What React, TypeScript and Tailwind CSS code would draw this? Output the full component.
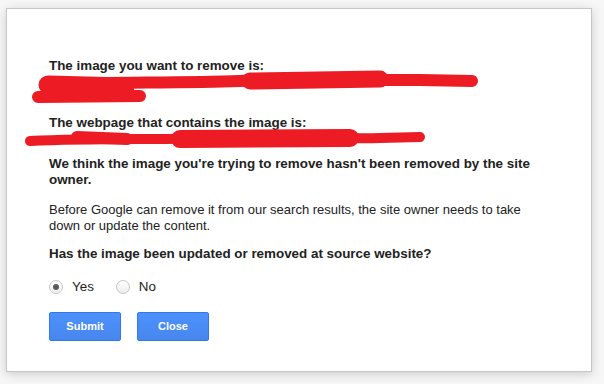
import React from 'react';

const font = { fontFamily: '"Liberation Sans", Arial, sans-serif' };

const Radio: React.FC<{ checked?: boolean; label: string }> = ({ checked, label }) => (
  <label className="flex items-center">
    <span className="w-[14px] h-[14px] rounded-full border border-[#c6c6c6] bg-gradient-to-b from-white to-[#eeeeee] flex items-center justify-center">
      {checked && <span className="w-[6px] h-[6px] rounded-full bg-[#5a5a5a]" />}
    </span>
    <span className="ml-[9px] text-[13.4px] text-[#222]">{label}</span>
  </label>
);

const Scribbles: React.FC = () => (
  <svg className="absolute inset-0 pointer-events-none" width="584" height="362" viewBox="0 0 584 362" fill="none">
    <g stroke="#ed1c24" strokeLinecap="round" strokeLinejoin="round">
      {/* first url */}
      <path d="M43 75 C113 73 173 74 233 72 C293 69 353 71 413 71 L465 72" strokeWidth="12" />
      <path d="M243 72 L373 70" strokeWidth="17" />
      <path d="M41 76 L118 78" strokeWidth="19" />
      <path d="M31 88 L133 87" strokeWidth="12" />
      {/* second url */}
      <path d="M23 132 C93 129 153 131 213 129 C283 127 333 130 373 129 L413 128" strokeWidth="10" />
      <path d="M173 130 L343 129" strokeWidth="18" />
      <path d="M70 128 L120 130" strokeWidth="12" />
    </g>
  </svg>
);

export default function App() {
  return (
    <div className="w-[604px] h-[384px] bg-[#f7f7f7] pt-[8px] pl-[6px]" style={font}>
      <div className="relative w-[586px] h-[364px] bg-white border border-[#c6c6c6] shadow-[0_2px_10px_rgba(0,0,0,0.18)] pl-[42px] pt-[49px] pr-[40px] text-[#222]">
        <p className="text-[13.4px] leading-[16px] font-bold">The image you want to remove is:</p>
        <div className="h-[41px]" />
        <p className="text-[13.4px] leading-[16px] font-bold">The webpage that contains the image is:</p>
        <p className="mt-[25px] text-[13.4px] leading-[16px] font-bold">
          We think the image you're trying to remove hasn't been removed by the site owner.
        </p>
        <p className="mt-[14px] text-[13px] leading-[16px]">
          Before Google can remove it from our search results, the site owner needs to take down or update the content.
        </p>
        <p className="mt-[12px] text-[13.4px] leading-[16px] font-bold">Has the image been updated or removed at source website?</p>
        <div className="mt-[17px] flex items-center gap-[22px] h-[16px]">
          <Radio checked label="Yes" />
          <Radio label="No" />
        </div>
        <div className="mt-[17px] flex gap-[16px]">
          <button className="w-[72px] h-[29px] rounded-[2px] border border-[#3079ed] bg-gradient-to-b from-[#4d90fe] to-[#4787ed] text-white text-[11px] font-bold">
            Submit
          </button>
          <button className="w-[72px] h-[29px] rounded-[2px] border border-[#3079ed] bg-gradient-to-b from-[#4d90fe] to-[#4787ed] text-white text-[11px] font-bold">
            Close
          </button>
        </div>
        <Scribbles />
      </div>
    </div>
  );
}
